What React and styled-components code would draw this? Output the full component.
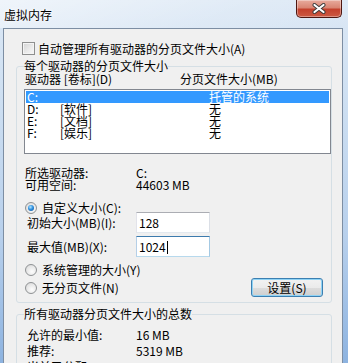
import styled, { createGlobalStyle, css } from 'styled-components'

const GlobalStyle = createGlobalStyle`
  html, body {
    margin: 0;
    padding: 0;
  }
  body {
    font-family: "Noto Sans CJK SC", "Noto Sans", sans-serif;
    font-size: 12px;
    color: #000;
  }
`

const Window = styled.div`
  width: 348px;
  height: 363px;
  overflow: hidden;
  display: flex;
  flex-direction: column;
  background: linear-gradient(180deg, #dce8f5 0%, #cfe0f2 25%, #b8d0ec 65%, #8db3e0 100%);
`
const TitleBar = styled.div`
  height: 28px;
  flex: none;
  display: flex;
  justify-content: space-between;
  align-items: flex-start;
  padding: 0 6px 0 4px;
  background: linear-gradient(160deg, rgba(255,255,255,0.55) 0%, rgba(255,255,255,0.15) 60%, rgba(255,255,255,0) 100%);
`
const Title = styled.div`
  margin-top: 8px;
  font-size: 12px;
  line-height: 14px;
  text-shadow: 0 0 5px #fff, 0 0 2px #fff;
`
const CloseButton = styled.div`
  width: 46px;
  height: 18px;
  box-sizing: border-box;
  border: 1px solid #4e1711;
  border-top: none;
  border-radius: 0 0 5px 5px;
  background: linear-gradient(180deg, #e8ab9d 0%, #d98573 45%, #c4412d 55%, #cc5a43 100%);
  box-shadow: inset 0 0 0 1px rgba(255, 255, 255, 0.35);
  display: flex;
  align-items: center;
  justify-content: center;
`
const Client = styled.div`
  flex: 1;
  margin: 0 5px 0 3px;
  padding-top: 13px;
  background: #f0f0f0;
  border: 1px solid #7d8ea3;
  border-bottom: none;
`
const CheckRow = styled.div`
  display: flex;
  align-items: center;
  gap: 3px;
  height: 13px;
  padding-left: 18px;
  line-height: 13px;
`
const CheckBox = styled.span`
  width: 13px;
  height: 13px;
  box-sizing: border-box;
  flex: none;
  border: 1px solid #8e8f8f;
  background: linear-gradient(135deg, #d3d3d3 0%, #ececec 60%, #f8f8f8 100%);
  box-shadow: inset 0 0 0 1px #f4f4f4;
`
const Group = styled.fieldset`
  margin: ${p => p.$top}px 10px 0 12px;
  padding: 1px 0 ${p => p.$bottom}px 7px;
  border: 1px solid #d5dfe5;
  border-radius: 3px;
  min-width: 0;
`
const Legend = styled.legend`
  padding: 0;
  font-size: 12px;
  line-height: 12px;
`
const ListHeader = styled.div`
  display: flex;
  height: 12px;
  line-height: 12px;
  padding-left: 1px;
`
const HeaderCol = styled.span`
  width: ${p => p.$w ? `${p.$w}px` : 'auto'};
  white-space: nowrap;
`
const DriveList = styled.div`
  margin-top: 4px;
  height: 65px;
  box-sizing: border-box;
  border: 1px solid #828790;
  padding: 1px;
  background: #fff;
`
const DriveRow = styled.div`
  display: flex;
  height: 12px;
  line-height: 12px;
  padding-left: 1px;
  white-space: nowrap;
  ${p => p.$selected && css`
    background: #3399ff;
    color: #fff;
  `}
`
const Cell = styled.span`
  width: ${p => p.$w ? `${p.$w}px` : 'auto'};
`
const InfoBlock = styled.div`
  margin-top: ${p => p.$top}px;
`
const InfoRow = styled.div`
  display: flex;
  height: ${p => p.$h}px;
  line-height: ${p => p.$h}px;
  padding-left: ${p => p.$indent}px;
  white-space: nowrap;
`
const InfoLabel = styled.span`
  width: ${p => 112 - p.$indent}px;
`
const RadioRow = styled.div`
  display: flex;
  align-items: center;
  gap: 5px;
  height: 12px;
  line-height: 12px;
  margin-top: ${p => p.$top}px;
  padding-left: 1px;
  white-space: nowrap;
`
const Radio = styled.span`
  position: relative;
  flex: none;
  width: 12px;
  height: 12px;
  box-sizing: border-box;
  border-radius: 50%;
  border: 1px solid #8f9294;
  background: radial-gradient(circle at 60% 65%, #fdfdfd 0%, #e6e6e6 60%, #d2d2d2 100%);
  ${p => p.$checked && css`
    &::after {
      content: '';
      position: absolute;
      left: 2px;
      top: 2px;
      width: 6px;
      height: 6px;
      border-radius: 50%;
      background: radial-gradient(circle at 40% 35%, #b4e8ff 0%, #2f90e0 45%, #0c4a8e 100%);
    }
  `}
`
const FieldRow = styled.div`
  display: flex;
  align-items: center;
  height: 21px;
  margin-top: ${p => p.$top}px;
  padding-left: 3px;
  white-space: nowrap;
`
const FieldLabel = styled.span`
  width: 109px;
`
const TextBox = styled.div`
  width: 74px;
  height: 21px;
  box-sizing: border-box;
  padding-left: 2px;
  line-height: 19px;
  background: #fff;
  border: 1px solid;
  border-color: #abadb3 #dbdfe6 #e3e9ef #e2e3ea;
  ${p => p.$focused && css`
    border-color: #3d7bad #a4c9e3 #b7d9ed #b5cfe7;
  `}
`
const Caret = styled.span`
  display: inline-block;
  width: 1px;
  height: 13px;
  margin-left: 1px;
  background: #000;
  vertical-align: -2px;
`
const ButtonRow = styled.div`
  display: flex;
  justify-content: space-between;
  align-items: center;
  height: 19px;
  margin-top: 2px;
  padding-right: 8px;
`
const Button = styled.button`
  width: 72px;
  height: 19px;
  padding: 0;
  font-family: inherit;
  font-size: 12px;
  line-height: 17px;
  color: #000;
  border: 1px solid #3c7fb1;
  border-radius: 3px;
  background: linear-gradient(180deg, #f2f2f2 0%, #ebebeb 50%, #dddddd 51%, #cfcfcf 100%);
  box-shadow: inset 0 0 0 1px #8fd3f5;
`

const drives = [
  { letter: 'C:', label: '', size: '托管的系统', selected: true },
  { letter: 'D:', label: '[软件]', size: '无' },
  { letter: 'E:', label: '[文档]', size: '无' },
  { letter: 'F:', label: '[娱乐]', size: '无' },
]

const App = () => {
  return (
    <Window>
      <GlobalStyle />
      <TitleBar>
        <Title>虚拟内存</Title>
        <CloseButton>
          <svg width="14" height="11" viewBox="0 0 14 11">
            <path d="M2.5 2 L11.5 9 M11.5 2 L2.5 9" stroke="#3a3a3a" strokeWidth="4" strokeLinecap="round" />
            <path d="M2.5 2 L11.5 9 M11.5 2 L2.5 9" stroke="#fff" strokeWidth="2.2" strokeLinecap="round" />
          </svg>
        </CloseButton>
      </TitleBar>
      <Client>
        <CheckRow>
          <CheckBox />
          <span>自动管理所有驱动器的分页文件大小(A)</span>
        </CheckRow>

        <Group $top={5} $bottom={5}>
          <Legend>每个驱动器的分页文件大小</Legend>
          <ListHeader>
            <HeaderCol $w={155}>驱动器 [卷标](D)</HeaderCol>
            <HeaderCol>分页文件大小(MB)</HeaderCol>
          </ListHeader>
          <DriveList>
            {drives.map(d => (
              <DriveRow key={d.letter} $selected={d.selected}>
                <Cell $w={33}>{d.letter}</Cell>
                <Cell $w={149}>{d.label}</Cell>
                <Cell>{d.size}</Cell>
              </DriveRow>
            ))}
          </DriveList>

          <InfoBlock $top={13}>
            <InfoRow $h={12} $indent={1}>
              <InfoLabel $indent={1}>所选驱动器:</InfoLabel>
              <span>C:</span>
            </InfoRow>
            <InfoRow $h={12} $indent={1}>
              <InfoLabel $indent={1}>可用空间:</InfoLabel>
              <span>44603 MB</span>
            </InfoRow>
          </InfoBlock>

          <RadioRow $top={11}>
            <Radio $checked />
            <span>自定义大小(C):</span>
          </RadioRow>
          <FieldRow $top={-2}>
            <FieldLabel>初始大小(MB)(I):</FieldLabel>
            <TextBox>128</TextBox>
          </FieldRow>
          <FieldRow $top={3}>
            <FieldLabel>最大值(MB)(X):</FieldLabel>
            <TextBox $focused>1024<Caret /></TextBox>
          </FieldRow>

          <RadioRow $top={7}>
            <Radio />
            <span>系统管理的大小(Y)</span>
          </RadioRow>
          <ButtonRow>
            <RadioRow $top={0}>
              <Radio />
              <span>无分页文件(N)</span>
            </RadioRow>
            <Button>设置(S)</Button>
          </ButtonRow>
        </Group>

        <Group $top={5} $bottom={0}>
          <Legend>所有驱动器分页文件大小的总数</Legend>
          <InfoBlock $top={6}>
            <InfoRow $h={16} $indent={3}>
              <InfoLabel $indent={3}>允许的最小值:</InfoLabel>
              <span>16 MB</span>
            </InfoRow>
            <InfoRow $h={16} $indent={3}>
              <InfoLabel $indent={3}>推荐:</InfoLabel>
              <span>5319 MB</span>
            </InfoRow>
            <InfoRow $h={16} $indent={3}>
              <InfoLabel $indent={3}>当前已分配:</InfoLabel>
              <span>8190 MB</span>
            </InfoRow>
          </InfoBlock>
        </Group>
      </Client>
    </Window>
  )
}

export default App
